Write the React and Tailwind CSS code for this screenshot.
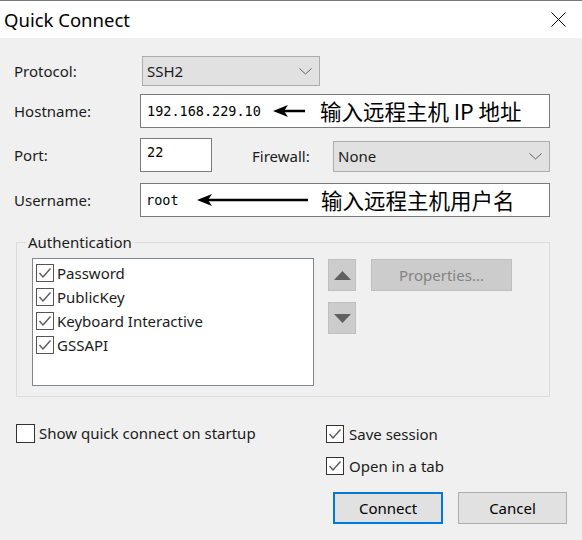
import React from "react";

const ui = "font-['Noto_Sans','Noto_Sans_CJK_SC',sans-serif]";
const mono = "font-['DejaVu_Sans_Mono',monospace]";
const cjk = "font-['Noto_Sans_CJK_SC','Noto_Sans',sans-serif]";

function Chevron() {
  return (
    <svg width="13" height="7" viewBox="0 0 13 7" className="shrink-0">
      <polyline points="0.5,0.5 6.5,6 12.5,0.5" fill="none" stroke="#606060" strokeWidth="1" />
    </svg>
  );
}

function Select({ value, className }) {
  return (
    <div className={`flex items-center justify-between border border-[#adadad] bg-[#e1e1e1] pl-[4px] pr-[7px] ${className}`}>
      <span className="text-[15px] text-[#1b1b1b]">{value}</span>
      <Chevron />
    </div>
  );
}

function Check({ checked, size = "w-[18px] h-[18px]", border = "border-[#333333]" }) {
  return (
    <div className={`${size} shrink-0 border ${border} bg-white flex items-center justify-center`}>
      {checked && (
        <svg width="14" height="12" viewBox="0 0 14 12">
          <polyline points="1.5,6 5,10 12.5,1.5" fill="none" stroke="#5a5a5a" strokeWidth="1.4" />
        </svg>
      )}
    </div>
  );
}

function Arrow({ width }) {
  return (
    <svg width={width} height="14" viewBox={`0 0 ${width} 14`} className="shrink-0">
      <path d="M0,7 L15,1 L11,7 L15,13 Z" fill="#000" />
      <line x1="10" y1="7" x2={width} y2="7" stroke="#000" strokeWidth="2.5" />
    </svg>
  );
}

function Label({ children }) {
  return <span className="w-[126px] shrink-0 text-[15px] text-[#1b1b1b]">{children}</span>;
}

export default function App() {
  return (
    <div className={`w-[582px] h-[540px] bg-[#f0f0f0] overflow-hidden ${ui}`}>
      {/* Title bar */}
      <div className="h-[38px] bg-white border-t border-[#7a7a7a] flex items-center justify-between pl-[4px] pr-[16px]">
        <span className="text-[18.5px] text-black">Quick Connect</span>
        <svg width="15" height="15" viewBox="0 0 15 15">
          <line x1="0.5" y1="0.5" x2="14.5" y2="14.5" stroke="#000" strokeWidth="1" />
          <line x1="14.5" y1="0.5" x2="0.5" y2="14.5" stroke="#000" strokeWidth="1" />
        </svg>
      </div>

      <div className="pl-[14px]">
        {/* Protocol */}
        <div className="mt-[18px] flex items-center h-[30px]">
          <Label>Protocol:</Label>
          <Select value="SSH2" className="ml-[2px] w-[178px] h-[30px]" />
        </div>

        {/* Hostname */}
        <div className="mt-[8px] flex items-center h-[34px]">
          <Label>Hostname:</Label>
          <div className="w-[410px] h-[34px] border border-[#7a7a7a] bg-white flex items-center pl-[6px]">
            <span className={`w-[126px] text-[13.5px] text-black ${mono}`}>192.168.229.10</span>
            <Arrow width={32} />
            <span className={`ml-[15px] text-[21.5px] text-black ${cjk}`}>输入远程主机 IP 地址</span>
          </div>
        </div>

        {/* Port / Firewall */}
        <div className="mt-[10px] flex items-center h-[34px]">
          <Label>Port:</Label>
          <div className={`w-[72px] h-[34px] border border-[#7a7a7a] bg-white pl-[6px] pt-[3px] text-[13.5px] text-black ${mono}`}>
            22
          </div>
          <span className="ml-[40px] mt-[2px] w-[81px] text-[15px] text-[#1b1b1b]">Firewall:</span>
          <Select value="None" className="mt-[3px] w-[217px] h-[31px]" />
        </div>

        {/* Username */}
        <div className="mt-[11px] flex items-center h-[34px]">
          <Label>Username:</Label>
          <div className="w-[410px] h-[34px] border border-[#7a7a7a] bg-white flex items-center pl-[5px]">
            <span className={`w-[51px] text-[13.5px] text-black ${mono}`}>root</span>
            <Arrow width={111} />
            <span className={`ml-[13px] text-[21.5px] text-black ${cjk}`}>输入远程主机用户名</span>
          </div>
        </div>

        {/* Authentication group */}
        <div className="relative mt-[25px] ml-[2px] w-[534px] h-[155px] border border-[#dcdcdc] flex items-start pl-[15px] pt-[15px]">
          <span className="absolute -top-[11px] left-[9px] bg-[#f0f0f0] px-[2px] text-[15px] text-[#1b1b1b] leading-[20px]">
            Authentication
          </span>
          <div className="w-[282px] h-[128px] border border-[#828790] bg-white pl-[3px] pt-[2px]">
            {["Password", "PublicKey", "Keyboard Interactive", "GSSAPI"].map((t) => (
              <div key={t} className="h-[24px] flex items-center">
                <Check checked border="border-[#555555]" />
                <span className="ml-[3px] text-[15px] text-[#1b1b1b]">{t}</span>
              </div>
            ))}
          </div>
          <div className="ml-[14px] mt-[1px] flex flex-col gap-[11px]">
            <div className="w-[28px] h-[32px] bg-[#cccccc] border border-[#bfbfbf] flex items-center justify-center">
              <svg width="17" height="9" viewBox="0 0 17 9">
                <path d="M8.5,0 L17,9 L0,9 Z" fill="#606060" />
              </svg>
            </div>
            <div className="w-[28px] h-[32px] bg-[#cccccc] border border-[#bfbfbf] flex items-center justify-center">
              <svg width="17" height="9" viewBox="0 0 17 9">
                <path d="M0,0 L17,0 L8.5,9 Z" fill="#606060" />
              </svg>
            </div>
          </div>
          <div className="ml-[15px] mt-[1px] w-[141px] h-[32px] bg-[#cccccc] border border-[#bfbfbf] flex items-center justify-center text-[15px] text-[#838383]">
            Properties...
          </div>
        </div>

        {/* Bottom options */}
        <div className="mt-[27px] flex items-start">
          <div className="w-[312px] pl-[2px] h-[19px] flex items-center">
            <Check checked={false} size="w-[19px] h-[19px]" />
            <span className="ml-[4px] text-[15px] leading-[19px] text-[#1b1b1b]">Show quick connect on startup</span>
          </div>
          <div className="flex flex-col">
            <div className="h-[18px] flex items-center mt-[1px]">
              <Check checked />
              <span className="ml-[5px] text-[15px] leading-[18px] text-[#1b1b1b]">Save session</span>
            </div>
            <div className="h-[18px] flex items-center mt-[14px]">
              <Check checked />
              <span className="ml-[5px] text-[15px] leading-[18px] text-[#1b1b1b]">Open in a tab</span>
            </div>
            <div className="flex mt-[17px] ml-[7px] gap-[15px]">
              <div className="w-[110px] h-[32px] bg-[#e1e1e1] border-2 border-[#0078d7] flex items-center justify-center text-[15px] text-black">
                Connect
              </div>
              <div className="w-[109px] h-[32px] bg-[#e1e1e1] border border-[#adadad] flex items-center justify-center text-[15px] text-black">
                Cancel
              </div>
            </div>
          </div>
        </div>
      </div>
    </div>
  );
}
